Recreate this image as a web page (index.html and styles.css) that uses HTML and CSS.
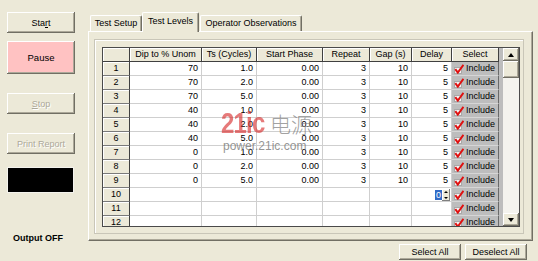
FILE: index.html
```html
<!DOCTYPE html>
<html>
<head>
<meta charset="utf-8">
<link rel="stylesheet" href="styles.css">
</head>
<body>
<div class="app">
  <div class="side">
    <div class="btn start">Sta<u>r</u>t</div>
    <div class="btn pause">Pause</div>
    <div class="btn stop disabled"><u>S</u>top</div>
    <div class="btn print disabled">Print Report</div>
    <div class="led"></div>
    <div class="status">Output OFF</div>
  </div>
  <div class="main">
    <div class="tabs">
      <div class="tab t-setup">Test Setup</div>
      <div class="tab t-levels active">Test Levels</div>
      <div class="tab t-oper">Operator Observations</div>
    </div>
    <div class="panel">
      <div class="frame">
        <div class="grid">
          <div class="gridbody">
            <div class="table">
              <div class="hc"></div><div class="hc">Dip to % Unom</div><div class="hc">Ts (Cycles)</div><div class="hc">Start Phase</div><div class="hc">Repeat</div><div class="hc">Gap (s)</div><div class="hc">Delay</div><div class="hc">Select</div>

              <div class="rh">1</div><div class="c">70</div><div class="c">1.0</div><div class="c">0.00</div><div class="c">3</div><div class="c">10</div><div class="c">5</div><div class="sc"><svg class="chk" viewBox="0 0 10 10"><rect x="0.5" y="3.5" width="7" height="6" fill="#f2f2f2" stroke="#a8a8a8"/><path d="M1.3 5.2 L3.8 8.6 L9.5 0.8" fill="none" stroke="#e01010" stroke-width="2"/></svg>Include</div>
              <div class="rh">2</div><div class="c">70</div><div class="c">2.0</div><div class="c">0.00</div><div class="c">3</div><div class="c">10</div><div class="c">5</div><div class="sc"><svg class="chk" viewBox="0 0 10 10"><rect x="0.5" y="3.5" width="7" height="6" fill="#f2f2f2" stroke="#a8a8a8"/><path d="M1.3 5.2 L3.8 8.6 L9.5 0.8" fill="none" stroke="#e01010" stroke-width="2"/></svg>Include</div>
              <div class="rh">3</div><div class="c">70</div><div class="c">5.0</div><div class="c">0.00</div><div class="c">3</div><div class="c">10</div><div class="c">5</div><div class="sc"><svg class="chk" viewBox="0 0 10 10"><rect x="0.5" y="3.5" width="7" height="6" fill="#f2f2f2" stroke="#a8a8a8"/><path d="M1.3 5.2 L3.8 8.6 L9.5 0.8" fill="none" stroke="#e01010" stroke-width="2"/></svg>Include</div>
              <div class="rh">4</div><div class="c">40</div><div class="c">1.0</div><div class="c">0.00</div><div class="c">3</div><div class="c">10</div><div class="c">5</div><div class="sc"><svg class="chk" viewBox="0 0 10 10"><rect x="0.5" y="3.5" width="7" height="6" fill="#f2f2f2" stroke="#a8a8a8"/><path d="M1.3 5.2 L3.8 8.6 L9.5 0.8" fill="none" stroke="#e01010" stroke-width="2"/></svg>Include</div>
              <div class="rh">5</div><div class="c">40</div><div class="c">2.0</div><div class="c">0.00</div><div class="c">3</div><div class="c">10</div><div class="c">5</div><div class="sc"><svg class="chk" viewBox="0 0 10 10"><rect x="0.5" y="3.5" width="7" height="6" fill="#f2f2f2" stroke="#a8a8a8"/><path d="M1.3 5.2 L3.8 8.6 L9.5 0.8" fill="none" stroke="#e01010" stroke-width="2"/></svg>Include</div>
              <div class="rh">6</div><div class="c">40</div><div class="c">5.0</div><div class="c">0.00</div><div class="c">3</div><div class="c">10</div><div class="c">5</div><div class="sc"><svg class="chk" viewBox="0 0 10 10"><rect x="0.5" y="3.5" width="7" height="6" fill="#f2f2f2" stroke="#a8a8a8"/><path d="M1.3 5.2 L3.8 8.6 L9.5 0.8" fill="none" stroke="#e01010" stroke-width="2"/></svg>Include</div>
              <div class="rh">7</div><div class="c">0</div><div class="c">1.0</div><div class="c">0.00</div><div class="c">3</div><div class="c">10</div><div class="c">5</div><div class="sc"><svg class="chk" viewBox="0 0 10 10"><rect x="0.5" y="3.5" width="7" height="6" fill="#f2f2f2" stroke="#a8a8a8"/><path d="M1.3 5.2 L3.8 8.6 L9.5 0.8" fill="none" stroke="#e01010" stroke-width="2"/></svg>Include</div>
              <div class="rh">8</div><div class="c">0</div><div class="c">2.0</div><div class="c">0.00</div><div class="c">3</div><div class="c">10</div><div class="c">5</div><div class="sc"><svg class="chk" viewBox="0 0 10 10"><rect x="0.5" y="3.5" width="7" height="6" fill="#f2f2f2" stroke="#a8a8a8"/><path d="M1.3 5.2 L3.8 8.6 L9.5 0.8" fill="none" stroke="#e01010" stroke-width="2"/></svg>Include</div>
              <div class="rh">9</div><div class="c">0</div><div class="c">5.0</div><div class="c">0.00</div><div class="c">3</div><div class="c">10</div><div class="c">5</div><div class="sc"><svg class="chk" viewBox="0 0 10 10"><rect x="0.5" y="3.5" width="7" height="6" fill="#f2f2f2" stroke="#a8a8a8"/><path d="M1.3 5.2 L3.8 8.6 L9.5 0.8" fill="none" stroke="#e01010" stroke-width="2"/></svg>Include</div>
              <div class="rh">10</div><div class="c"></div><div class="c"></div><div class="c"></div><div class="c"></div><div class="c"></div><div class="c edit"><span class="selval">0</span><span class="spin"><i class="up"></i><i class="dn"></i></span></div><div class="sc"><svg class="chk" viewBox="0 0 10 10"><rect x="0.5" y="3.5" width="7" height="6" fill="#f2f2f2" stroke="#a8a8a8"/><path d="M1.3 5.2 L3.8 8.6 L9.5 0.8" fill="none" stroke="#e01010" stroke-width="2"/></svg>Include</div>
              <div class="rh">11</div><div class="c"></div><div class="c"></div><div class="c"></div><div class="c"></div><div class="c"></div><div class="c"></div><div class="sc"><svg class="chk" viewBox="0 0 10 10"><rect x="0.5" y="3.5" width="7" height="6" fill="#f2f2f2" stroke="#a8a8a8"/><path d="M1.3 5.2 L3.8 8.6 L9.5 0.8" fill="none" stroke="#e01010" stroke-width="2"/></svg>Include</div>
              <div class="rh">12</div><div class="c"></div><div class="c"></div><div class="c"></div><div class="c"></div><div class="c"></div><div class="c"></div><div class="sc"><svg class="chk" viewBox="0 0 10 10"><rect x="0.5" y="3.5" width="7" height="6" fill="#f2f2f2" stroke="#a8a8a8"/><path d="M1.3 5.2 L3.8 8.6 L9.5 0.8" fill="none" stroke="#e01010" stroke-width="2"/></svg>Include</div>
            </div>
          </div>
          <div class="vscroll">
            <div class="sbtn"><i class="arr-up"></i></div>
            <div class="thumb"></div>
            <div class="track"></div>
            <div class="sbtn"><i class="arr-dn"></i></div>
          </div>
        </div>
      </div>
    </div>
    <div class="actions">
      <div class="btn small">Select All</div>
      <div class="btn small">Deselect All</div>
    </div>
  </div>
  <div class="watermark">
    <div class="wm-top"><span class="wm-21">21ic</span><span class="wm-cn">电源</span></div>
    <div class="wm-url">power.21ic.com</div>
  </div>
</div>
</body>
</html>
```

FILE: styles.css
```css
* { box-sizing: border-box; }
body {
  margin: 0;
  background: #ece9d8;
  font: 9px "Liberation Sans", Arial, sans-serif;
  color: #000;
}
.app {
  position: relative;
  width: 538px;
  height: 261px;
  display: flex;
  overflow: hidden;
}

/* left column */
.side {
  width: 88px;
  padding: 12px 0 0 7px;
  display: flex;
  flex-direction: column;
  align-items: flex-start;
}
.btn {
  width: 68px;
  height: 21px;
  background: #ece9d8;
  display: flex;
  align-items: center;
  justify-content: center;
  box-shadow: inset -1px -1px #716f64, inset 1px 1px #fff, inset -2px -2px #aca899;
  white-space: nowrap;
}
.btn u { text-decoration: underline; text-underline-offset: 1px; }
.pause {
  margin-top: 8px;
  height: 33px;
  background: #ffc2c2;
  font-size: 9.5px;
}
.stop { margin-top: 19px; }
.print { margin-top: 19px; }
.disabled {
  color: #aca899;
  text-shadow: 1px 1px 0 #fff;
}
.led {
  margin-top: 13px;
  width: 67px;
  height: 26px;
  background: #000;
  border: 1px solid #f4f3ee;
}
.status {
  margin-top: 40px;
  margin-left: 6px;
  font-weight: bold;
  line-height: 11px;
}

/* main */
.main {
  width: 445px;
  padding-top: 13px;
  display: flex;
  flex-direction: column;
}
.tabs {
  height: 18px;
  display: flex;
  align-items: flex-end;
  padding-left: 2px;
  position: relative;
  z-index: 2;
}
.tab {
  height: 16px;
  line-height: 15px;
  text-align: center;
  border-left: 1px solid #fff;
  border-top: 1px solid #fff;
  border-right: 1px solid #716f64;
  border-radius: 2px 2px 0 0;
  box-shadow: inset -1px 0 #aca899;
  background: #ece9d8;
}
.t-setup { width: 52px; }
.t-levels { width: 57px; }
.t-oper { width: 102px; margin-left: 1px; }
.tab.active {
  height: 20px;
  line-height: 17px;
  margin-bottom: -1px;
  padding-bottom: 2px;
}
.panel {
  height: 210px;
  border-left: 1px solid #fff;
  border-top: 1px solid #fff;
  border-right: 1px solid #716f64;
  border-bottom: 1px solid #716f64;
  box-shadow: inset -1px -1px #aca899;
  padding: 7px 8px 0 5px;
}
.frame {
  height: 195px;
  border: 1px solid #c9c6b8;
  box-shadow: inset 1px 1px #fff;
  padding: 7px 3px 0 7px;
}
.grid {
  display: flex;
  width: 418px;
  height: 180px;
  border: 1px solid #4a4a4a;
}
.gridbody {
  width: 400px;
  height: 178px;
  overflow: hidden;
  background: #bdbdbd;
}
.table {
  display: grid;
  grid-template-columns: 27px 72px 55px 66px 47px 42px 40px 47px;
  grid-auto-rows: 14px;
}
.table > div {
  line-height: 13px;
  white-space: nowrap;
  overflow: hidden;
}
.hc {
  background: #ece9d8;
  border-right: 1px solid #404040;
  border-bottom: 1px solid #404040;
  box-shadow: inset 1px 1px #fff;
  text-align: center;
}
.rh {
  background: #ece9d8;
  border-right: 1px solid #404040;
  border-bottom: 1px solid #7a7a7a;
  box-shadow: inset 1px 1px #fff;
  text-align: center;
}
.c {
  background: #fff;
  border-right: 1px solid #cfcfcf;
  border-bottom: 1px solid #cfcfcf;
  text-align: right;
  padding-right: 3px;
}
.sc {
  background: #bdbdbd;
  border-right: 1px solid #6a6a6a;
  border-bottom: 1px solid #d6d6d6;
  display: flex;
  align-items: center;
  padding-left: 2px;
}
.chk {
  width: 10px;
  height: 10px;
  margin-right: 2px;
  flex: none;
}
.edit {
  display: flex;
  justify-content: flex-end;
  align-items: center;
  padding-right: 1px;
}
.selval {
  background: #316ac5;
  color: #fff;
  width: 7px;
  height: 10px;
  line-height: 10px;
  text-align: center;
}
.spin {
  width: 8px;
  height: 12px;
  display: flex;
  flex-direction: column;
  align-items: center;
  justify-content: space-around;
  background: #ece9d8;
  box-shadow: inset -1px -1px #808080, inset 1px 1px #fff;
}
.spin i {
  width: 0;
  height: 0;
  border-left: 2px solid transparent;
  border-right: 2px solid transparent;
}
.spin .up { border-bottom: 2px solid #000; }
.spin .dn { border-top: 2px solid #000; }

/* scrollbar */
.vscroll {
  width: 16px;
  display: flex;
  flex-direction: column;
  background: #f4f3ee;
}
.sbtn, .thumb {
  background: #ece9d8;
  box-shadow: inset -1px -1px #716f64, inset 1px 1px #fff, inset -2px -2px #aca899;
  display: flex;
  align-items: center;
  justify-content: center;
}
.sbtn { height: 13px; }
.thumb { height: 17px; }
.track { flex: 1; }
.arr-up, .arr-dn {
  width: 0;
  height: 0;
  border-left: 3.5px solid transparent;
  border-right: 3.5px solid transparent;
}
.arr-up { border-bottom: 4px solid #000; }
.arr-dn { border-top: 4px solid #000; }

/* bottom buttons */
.actions {
  display: flex;
  justify-content: flex-end;
  gap: 4px;
  padding-right: 6px;
  margin-top: 3px;
}
.btn.small {
  width: 62px;
  height: 16px;
}

/* watermark */
.watermark {
  position: absolute;
  left: 221px;
  top: 108px;
  pointer-events: none;
}
.wm-top {
  display: flex;
  align-items: center;
  height: 30px;
}
.wm-21 {
  display: inline-block;
  font: bold 30px "Liberation Sans", Arial, sans-serif;
  color: rgba(214, 40, 40, 0.62);
  transform: scaleX(0.8);
  transform-origin: left center;
  width: 49px;
  letter-spacing: -1px;
}
.wm-cn {
  font: 300 21px "Noto Sans CJK SC", sans-serif;
  color: rgba(120, 120, 120, 0.7);
}
.wm-url {
  font: 12px "Liberation Sans", Arial, sans-serif;
  color: rgba(120, 120, 120, 0.8);
  margin-top: 2px;
  margin-left: 2px;
  line-height: 13px;
}
```
